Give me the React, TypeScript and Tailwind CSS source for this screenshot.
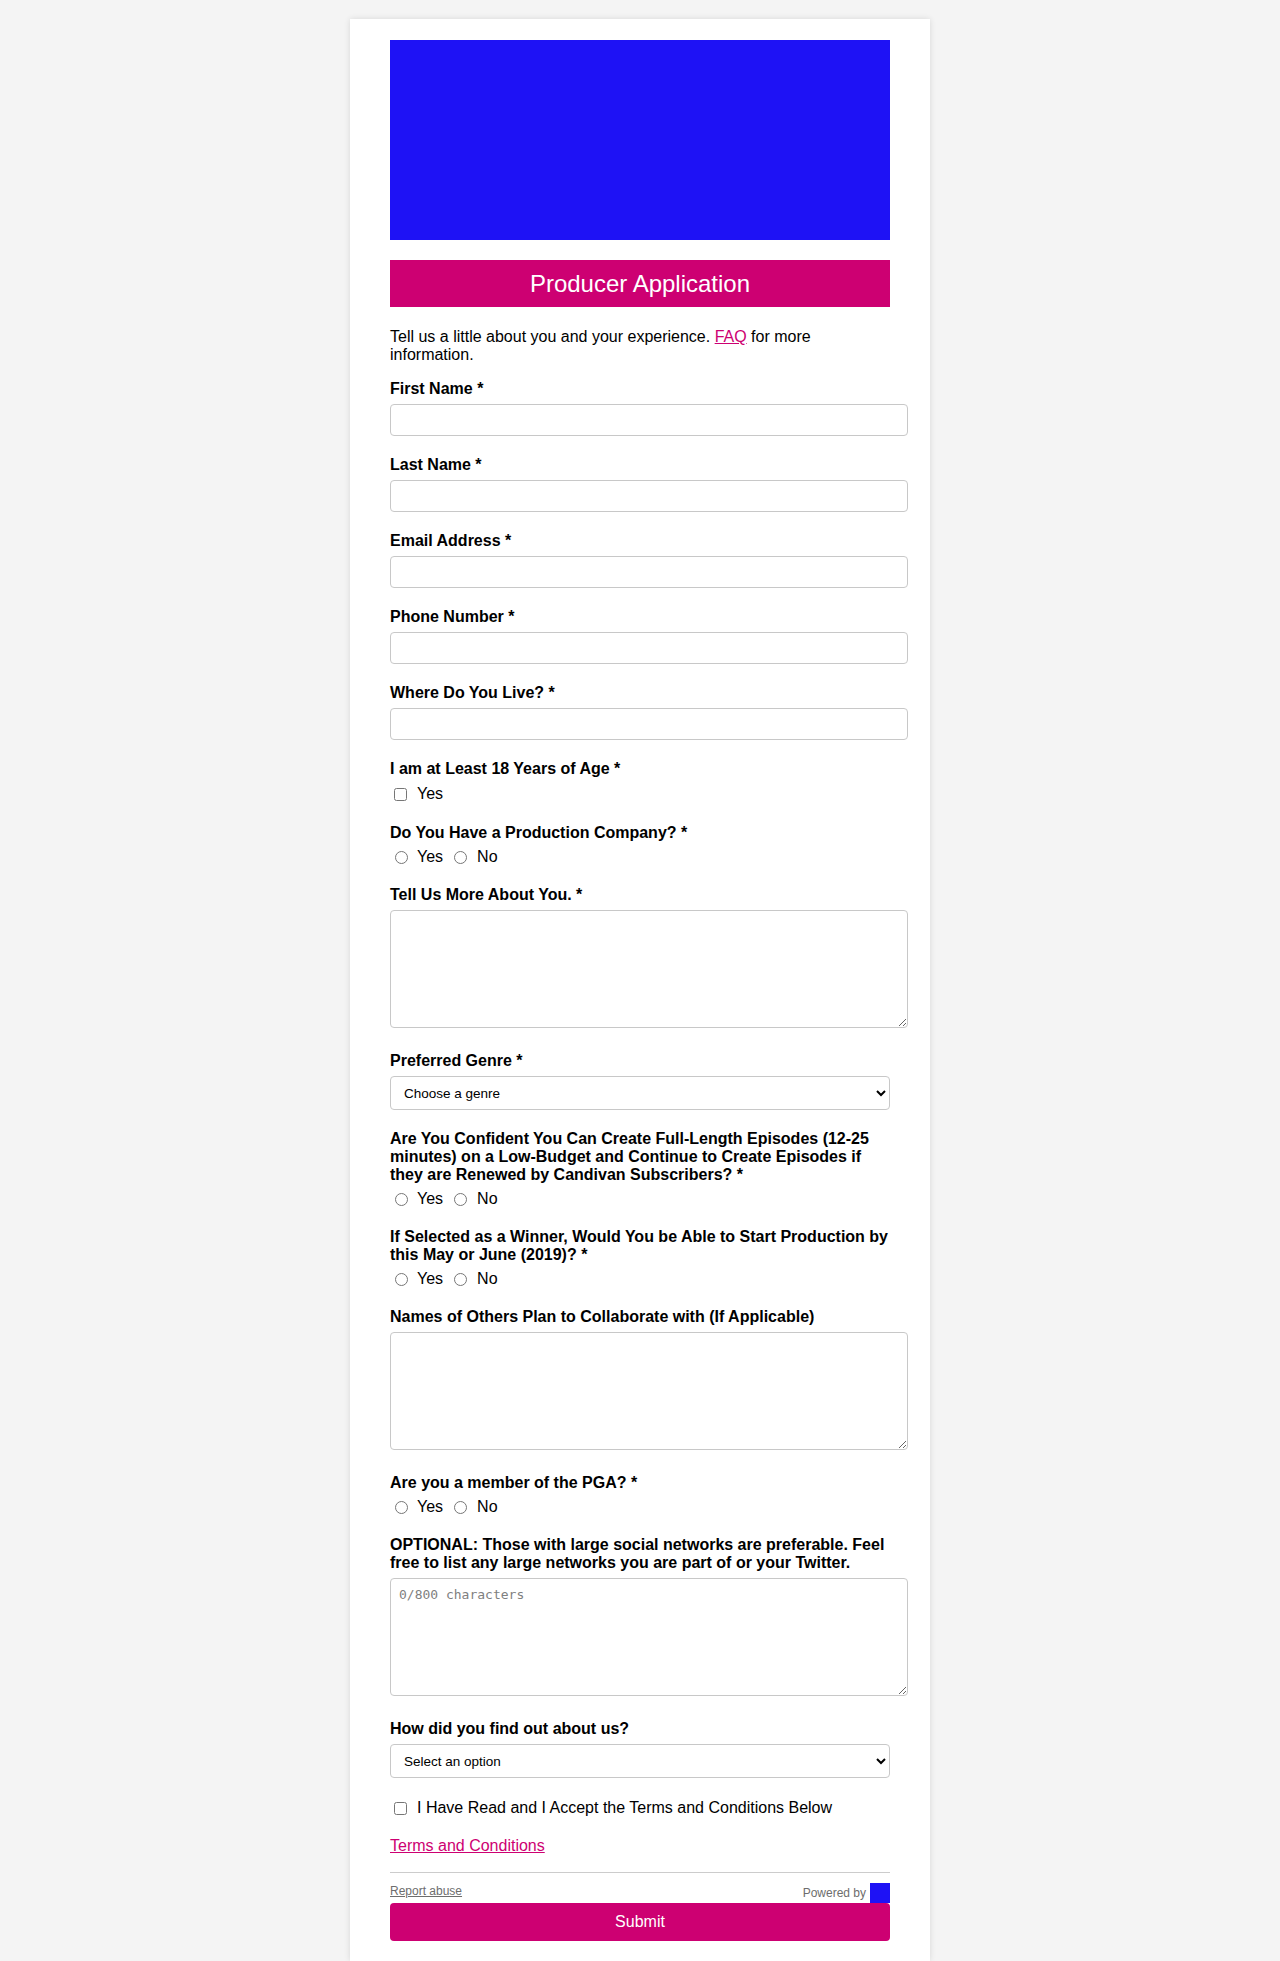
import React from 'react';

const Label = ({ children }: { children: React.ReactNode }) => (
    <label className="block font-bold text-[16px] leading-[18px] mb-[6px]">{children}</label>
);

const TextInput = () => (
    <input type="text" className="block w-[518px] h-[32px] px-[8px] border border-[#c8c8c8] rounded-[4px] bg-white" />
);

const TextArea = ({ placeholder }: { placeholder?: string }) => (
    <textarea
        placeholder={placeholder}
        className="block w-[518px] h-[118px] px-[8px] py-[6px] border border-[#c8c8c8] rounded-[4px] bg-white font-['DejaVu_Sans_Mono',monospace] text-[13px] placeholder:text-[#808080]"
    />
);

const Select = ({ text }: { text: string }) => (
    <select className="block w-[500px] h-[34px] pl-[9px] pr-[8px] border border-[#c8c8c8] rounded-[4px] bg-white text-[13.5px] text-black">
        <option>{text}</option>
    </select>
);

const YesNo = ({ name }: { name: string }) => (
    <div className="flex items-center h-[18px] text-[16px]">
        <input type="radio" name={name} className="ml-[5px] mr-[9px] w-[13px] h-[13px]" />
        <span>Yes</span>
        <input type="radio" name={name} className="ml-[11px] mr-[10px] w-[13px] h-[13px]" />
        <span>No</span>
    </div>
);

const Field = ({ label, children, extra = false }: { label: React.ReactNode; children: React.ReactNode; extra?: boolean }) => (
    <div className={extra ? 'mb-[24px]' : 'mb-[20px]'}>
        <Label>{label}</Label>
        {children}
    </div>
);

const App = () => {
    return (
        <div className="min-h-[1961px] bg-[#f4f4f4] pt-[19px] font-['Liberation_Sans',Arial,sans-serif] text-black">
            <div className="mx-auto w-[580px] bg-white shadow-[0_0_6px_rgba(0,0,0,0.12)] px-[40px] pt-[21px] pb-[20px]">
                {/* Banner */}
                <div className="w-[500px] h-[200px] bg-[#1e12f5]"></div>

                {/* Title */}
                <div className="mt-[20px] h-[47px] flex items-center justify-center bg-[#cd0072]">
                    <h1 className="text-white text-[24px] leading-[28px]">Producer Application</h1>
                </div>

                <p className="mt-[21px] mb-[16px] text-[16px] leading-[18px]">
                    <span>Tell us a little about you and your experience. </span>
                    <a href="#" className="text-[#cd0072] underline">FAQ</a>
                    <span> for more</span>
                    <br />
                    <span>information.</span>
                </p>

                <Field label="First Name *"><TextInput /></Field>
                <Field label="Last Name *"><TextInput /></Field>
                <Field label="Email Address *"><TextInput /></Field>
                <Field label="Phone Number *"><TextInput /></Field>
                <Field label="Where Do You Live? *"><TextInput /></Field>

                <Field label="I am at Least 18 Years of Age *">
                    <div className="flex items-center h-[20px] text-[16px]">
                        <input type="checkbox" className="ml-[4px] mr-[10px] w-[13px] h-[13px]" />
                        <span>Yes</span>
                    </div>
                </Field>

                <Field label="Do You Have a Production Company? *"><YesNo name="company" /></Field>

                <Field label="Tell Us More About You. *" extra><TextArea /></Field>

                <Field label="Preferred Genre *"><Select text="Choose a genre" /></Field>

                <Field label="Are You Confident You Can Create Full-Length Episodes (12-25 minutes) on a Low-Budget and Continue to Create Episodes if they are Renewed by Candivan Subscribers? *">
                    <YesNo name="confident" />
                </Field>

                <Field label="If Selected as a Winner, Would You be Able to Start Production by this May or June (2019)? *">
                    <YesNo name="winner" />
                </Field>

                <Field label="Names of Others Plan to Collaborate with (If Applicable)" extra><TextArea /></Field>

                <Field label="Are you a member of the PGA? *"><YesNo name="pga" /></Field>

                <Field label="OPTIONAL: Those with large social networks are preferable. Feel free to list any large networks you are part of or your Twitter." extra>
                    <TextArea placeholder="0/800 characters" />
                </Field>

                <Field label="How did you find out about us?"><Select text="Select an option" /></Field>

                <div className="flex items-center h-[20px] text-[16px] mb-[19px]">
                    <input type="checkbox" className="ml-[4px] mr-[10px] w-[13px] h-[13px]" />
                    <span>I Have Read and I Accept the Terms and Conditions Below</span>
                </div>

                <a href="#" className="block w-fit text-[16px] leading-[18px] text-[#cd0072] underline">Terms and Conditions</a>

                {/* Footer */}
                <div className="mt-[17px] border-t border-[#cccccc] w-[500px]"></div>
                <div className="flex justify-between items-start w-[500px] pt-[10px]">
                    <a href="#" className="mt-[1px] text-[12px] leading-[14px] text-[#6d6d6d] underline">Report abuse</a>
                    <div className="flex items-start gap-[4px]">
                        <span className="mt-[3px] text-[12px] leading-[14px] text-[#6d6d6d]">Powered by</span>
                        <div className="w-[20px] h-[20px] bg-[#1e12f5]"></div>
                    </div>
                </div>
                <button className="block w-[500px] h-[38px] bg-[#cd0072] text-white text-[16px] rounded-[4px]">
                    Submit
                </button>
            </div>
        </div>
    );
};

export default App;
